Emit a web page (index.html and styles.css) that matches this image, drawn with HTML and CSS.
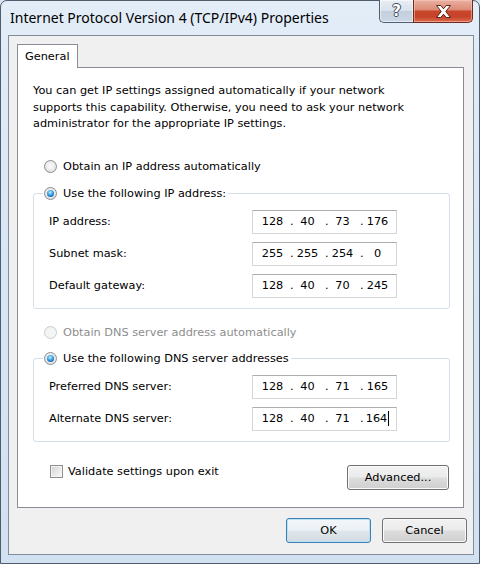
FILE: index.html
```html
<!DOCTYPE html>
<html>
<head>
<meta charset="utf-8">
<title>Internet Protocol Version 4 (TCP/IPv4) Properties</title>
<link rel="stylesheet" href="styles.css">
</head>
<body>
<div class="window">
  <div class="titlebar">
    <div class="title">Internet Protocol Version 4 (TCP/IPv4) Properties</div>
    <div class="caption-btns">
      <div class="cbtn help"><span class="qmark">?</span></div>
      <div class="cbtn close">
        <svg width="17" height="13" viewBox="0 0 17 13"><path d="M1.5 0.5 H5.8 L8.5 3.8 L11.2 0.5 H15.5 L10.8 6.5 L15.5 12.5 H11.2 L8.5 9.2 L5.8 12.5 H1.5 L6.2 6.5 Z" fill="#fff" stroke="#5a2418" stroke-width="1"/></svg>
      </div>
    </div>
  </div>
  <div class="client">
    <div class="tabs"><div class="tab">General</div></div>
    <div class="page">
      <p class="intro">You can get IP settings assigned automatically if your network<br>supports this capability. Otherwise, you need to ask your network<br>administrator for the appropriate IP settings.</p>

      <div class="radio-row"><span class="radio"></span><span>Obtain an IP address automatically</span></div>
      <fieldset class="group">
        <legend><span class="radio on"></span><span>Use the following IP address:</span></legend>
        <div class="field-row"><span class="label">IP address:</span><div class="ipbox"><span class="oct">128</span><span class="dot">.</span><span class="oct">40</span><span class="dot">.</span><span class="oct">73</span><span class="dot">.</span><span class="oct">176</span></div></div>
        <div class="field-row"><span class="label">Subnet mask:</span><div class="ipbox"><span class="oct">255</span><span class="dot">.</span><span class="oct">255</span><span class="dot">.</span><span class="oct">254</span><span class="dot">.</span><span class="oct">0</span></div></div>
        <div class="field-row"><span class="label">Default gateway:</span><div class="ipbox"><span class="oct">128</span><span class="dot">.</span><span class="oct">40</span><span class="dot">.</span><span class="oct">70</span><span class="dot">.</span><span class="oct">245</span></div></div>
      </fieldset>

      <div class="radio-row second disabled"><span class="radio"></span><span>Obtain DNS server address automatically</span></div>
      <fieldset class="group">
        <legend><span class="radio on"></span><span>Use the following DNS server addresses</span></legend>
        <div class="field-row"><span class="label">Preferred DNS server:</span><div class="ipbox"><span class="oct">128</span><span class="dot">.</span><span class="oct">40</span><span class="dot">.</span><span class="oct">71</span><span class="dot">.</span><span class="oct">165</span></div></div>
        <div class="field-row"><span class="label">Alternate DNS server:</span><div class="ipbox"><span class="oct">128</span><span class="dot">.</span><span class="oct">40</span><span class="dot">.</span><span class="oct">71</span><span class="dot">.</span><span class="oct last">164<span class="caret"></span></span></div></div>
      </fieldset>

      <div class="bottom-row">
        <div class="check"><span class="checkbox"></span><span>Validate settings upon exit</span></div>
        <div class="btn adv">Advanced...</div>
      </div>
    </div>
    <div class="buttons">
      <div class="btn ok">OK</div>
      <div class="btn cancel">Cancel</div>
    </div>
  </div>
</div>
</body>
</html>
```
FILE: styles.css
```css
* { box-sizing: border-box; }

html, body {
  margin: 0;
  padding: 0;
}

body {
  width: 480px;
  height: 564px;
  overflow: hidden;
  font-family: "DejaVu Sans", "Liberation Sans", sans-serif;
  font-size: 11.3px;
  color: #000;
  background: #d6e3f2;
}

.window {
  width: 480px;
  height: 564px;
  border: 1px solid #4f5c6c;
  border-radius: 7px 7px 0 0;
  background: linear-gradient(to bottom, #e3edf8 0%, #d9e6f5 40%, #d2e1f2 100%);
  display: flex;
  flex-direction: column;
}

.titlebar {
  height: 34px;
  flex: none;
  display: flex;
  justify-content: space-between;
  align-items: flex-start;
}

.title {
  font-family: "Noto Sans", "Open Sans", sans-serif;
  font-size: 14px;
  color: #000;
  padding-left: 9px;
  padding-top: 7px;
  line-height: 20px;
  white-space: nowrap;
}

.caption-btns {
  display: flex;
  margin-top: -1px;
  margin-right: 6px;
}

.cbtn {
  height: 23px;
  display: flex;
  align-items: center;
  justify-content: center;
  border: 1px solid #4e5d70;
  border-top: none;
}

.help {
  width: 34px;
  border-right: none;
  border-radius: 0 0 0 5px;
  background: linear-gradient(to bottom, #e9eef5 0%, #d8e1ec 48%, #c3cfdd 52%, #cbd7e5 100%);
  box-shadow: inset 0 0 0 1px rgba(255,255,255,0.55);
}

.qmark {
  font-family: "DejaVu Sans", sans-serif;
  font-weight: bold;
  font-size: 15px;
  line-height: 15px;
  color: #fff;
  text-shadow: 1px 0 0 #3d4b5c, -1px 0 0 #3d4b5c, 0 1px 0 #3d4b5c, 0 -1px 0 #3d4b5c;
}

.close {
  width: 60px;
  border-color: #6e2a1d;
  border-radius: 0 0 5px 0;
  background: linear-gradient(to bottom, #eab1a2 0%, #dc8a75 45%, #c8462b 50%, #c6432a 75%, #dc6a4c 100%);
  box-shadow: inset 0 0 0 1px rgba(255,210,200,0.5);
}

.close svg { display: block; }

.client {
  flex: none;
  height: 520px;
  margin: 0 5px 0 7px;
  border: 1px solid #818d9a;
  background: #f0f0f0;
  display: flex;
  flex-direction: column;
}

.tabs {
  padding: 8px 0 0 8px;
  display: flex;
}

.tab {
  position: relative;
  z-index: 1;
  width: 61px;
  height: 24px;
  margin-bottom: -1px;
  border: 1px solid #898c95;
  border-bottom: none;
  background: #fff;
  padding-left: 7px;
  display: flex;
  align-items: center;
}

.page {
  width: 447px;
  height: 441px;
  margin-left: 8px;
  border: 1px solid #898c95;
  background: #fff;
  padding: 15px 14px 0 15px;
  display: flex;
  flex-direction: column;
}

.intro {
  margin: 0;
  line-height: 16.5px;
  white-space: nowrap;
}

.radio-row {
  margin-top: 26px;
  padding-left: 11px;
  height: 16px;
  display: flex;
  align-items: center;
}

.radio-row.second { margin-top: 16px; }

.disabled { color: #8d8d8d; }

.radio {
  width: 13px;
  height: 13px;
  flex: none;
  border-radius: 50%;
  border: 1px solid #8b8e92;
  background: radial-gradient(circle at 50% 45%, #fbfbfb 0%, #eeeeee 45%, #cfd1d3 100%);
  margin-right: 6px;
  display: flex;
  align-items: center;
  justify-content: center;
}

.disabled .radio {
  border-color: #c9cbcd;
  background: #f4f4f4;
}

.radio.on::after {
  content: "";
  width: 7px;
  height: 7px;
  border-radius: 50%;
  background: radial-gradient(circle at 45% 35%, #c8f1ff 0%, #4fb3ea 35%, #1d6fc2 70%, #0e3f86 100%);
}

.group {
  margin: 11px 0 0 0;
  padding: 0 52px 10px 15px;
  width: 417px;
  min-width: 0;
  border: 1px solid #d5dfe5;
  border-radius: 3px;
}

.radio-row.second + .group { margin-top: 10px; }

.group legend {
  margin-left: -6px;
  padding: 0 2px 0 1px;
  height: 16px;
  display: flex;
  align-items: center;
}

.field-row {
  margin-top: 8px;
  height: 24px;
  display: flex;
  align-items: center;
}

.label { flex: 1; }

.ipbox {
  width: 145px;
  height: 24px;
  flex: none;
  border: 1px solid #d3d6da;
  border-top-color: #abadb3;
  padding-left: 5px;
  display: flex;
  align-items: center;
}

.oct {
  width: 32px;
  padding-right: 3px;
  display: flex;
  justify-content: center;
  align-items: center;
}

.dot {
  width: 3px;
}

.caret {
  width: 1px;
  height: 15px;
  background: #000;
  margin-left: 1px;
}

.bottom-row {
  display: flex;
  justify-content: space-between;
  align-items: flex-start;
}

.check {
  margin-top: 22px;
  padding-left: 17px;
  height: 16px;
  display: flex;
  align-items: center;
}

.checkbox {
  width: 13px;
  height: 13px;
  border: 1px solid #8e8f8f;
  background: linear-gradient(135deg, #d0d0d0 0%, #e8e8e8 50%, #f9f9f9 100%);
  box-shadow: inset 0 0 0 1px #f4f4f4;
  margin-right: 5px;
}

.btn {
  height: 25px;
  border: 1px solid #707070;
  border-radius: 3px;
  background: linear-gradient(to bottom, #f2f2f2 0%, #ebebeb 48%, #dddddd 52%, #cfcfcf 100%);
  box-shadow: inset 0 0 0 1px #fbfbfb;
  display: flex;
  align-items: center;
  justify-content: center;
}

.adv {
  width: 102px;
  margin-top: 23px;
}

.buttons {
  display: flex;
  justify-content: flex-end;
  gap: 11px;
  margin-top: 10px;
  padding-right: 6px;
}

.ok, .cancel { width: 85px; }

.ok {
  border-color: #3c7fb1;
  box-shadow: inset 0 0 0 1px #b9e2f7;
  background: linear-gradient(to bottom, #f3f7fa 0%, #ecf1f5 48%, #dfe6eb 52%, #d2dbe2 100%);
}
```
